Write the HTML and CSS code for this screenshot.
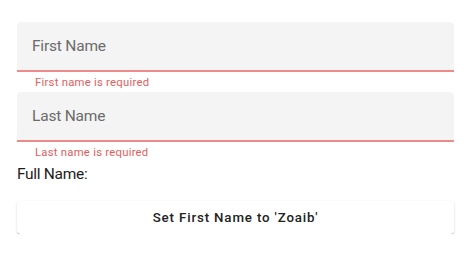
FILE: index.html
```html
<!DOCTYPE html>
<html lang="en">
<head>
    <meta charset="UTF-8">
    <meta name="viewport" content="width=device-width, initial-scale=1.0">
    <title>Name Form</title>
    <link rel="stylesheet" href="styles.css">
</head>
<body>

<div class="form">
    <!-- First name field -->
    <div class="field">
        <div class="field-box">
            <span class="field-label">First Name</span>
        </div>
        <div class="field-error">First name is required</div>
    </div>

    <!-- Last name field -->
    <div class="field">
        <div class="field-box">
            <span class="field-label">Last Name</span>
        </div>
        <div class="field-error">Last name is required</div>
    </div>

    <div class="full-name">Full Name:</div>

    <button class="set-btn">Set First Name to 'Zoaib'</button>
</div>

</body>
</html>
```

FILE: styles.css
```css
body {
    font-family: 'Roboto', 'Liberation Sans', sans-serif;
    background-color: #ffffff;
    color: #222;
    margin: 0;
}
.form {
    padding: 22px 20px 0 17px;
    display: flex;
    flex-direction: column;
}
.field-box {
    height: 48px;
    background-color: #f4f4f4;
    border-radius: 4px 4px 0 0;
    border-bottom: 2px solid #ee8a8a;
    display: flex;
    align-items: center;
    padding-left: 15px;
}
.field-error {
    height: 18px;
    padding-top: 2px;
    line-height: 18px;
    padding-left: 18px;
    font-size: 11.3px;
    color: #e35d5d;
    letter-spacing: 0.25px;
}
.field-label {
    font-size: 15.5px;
    color: #6b6b6b;
    letter-spacing: -0.2px;
}
.full-name {
    font-size: 15.5px;
    line-height: 24px;
    color: #1c1c1c;
    letter-spacing: -0.3px;
}
.set-btn {
    margin-top: 15px;
    height: 33px;
    background-color: #ffffff;
    border: none;
    border-radius: 4px;
    box-shadow: 0 2px 1px -1px rgba(0, 0, 0, 0.2), 0 1px 1px rgba(0, 0, 0, 0.14), 0 1px 3px rgba(0, 0, 0, 0.12);
    font-family: inherit;
    font-size: 13.3px;
    font-weight: 500;
    letter-spacing: 0.85px;
    color: #222;
    cursor: pointer;
}
```
